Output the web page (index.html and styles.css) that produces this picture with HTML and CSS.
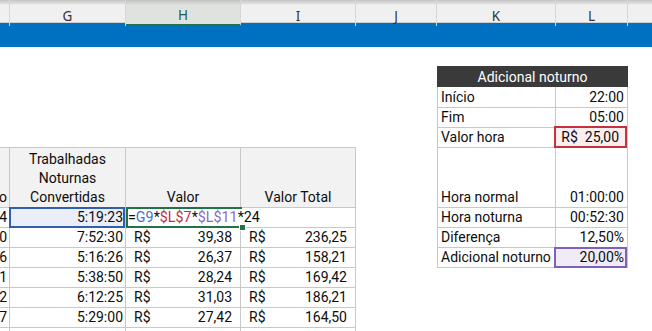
FILE: index.html
```html
<!DOCTYPE html>
<html lang="pt-BR">
<head>
<meta charset="utf-8">
<title>Adicional noturno</title>
<link rel="stylesheet" href="styles.css">
</head>
<body>
<div class="colbar">
  <div class="ch"></div>
  <div class="ch">G</div>
  <div class="ch sel">H</div>
  <div class="ch">I</div>
  <div class="ch">J</div>
  <div class="ch">K</div>
  <div class="ch">L</div>
  <div class="ch last"></div>
</div>
<div class="band"></div>
<div class="sheet">
  <!-- row A -->
  <div class="c"></div><div class="c"></div><div class="c"></div><div class="c"></div><div class="c"></div><div class="c"></div><div class="c"></div><div class="c"></div>
  <!-- row B -->
  <div class="c"></div><div class="c"></div><div class="c"></div><div class="c"></div><div class="c"></div>
  <div class="c title">Adicional noturno</div>
  <div class="c"></div>
  <!-- row C -->
  <div class="c"></div><div class="c"></div><div class="c"></div><div class="c"></div><div class="c"></div>
  <div class="c k">Início</div><div class="c l num">22:00</div><div class="c"></div>
  <!-- row D -->
  <div class="c"></div><div class="c"></div><div class="c"></div><div class="c"></div><div class="c"></div>
  <div class="c k">Fim</div><div class="c l num">05:00</div><div class="c"></div>
  <!-- row E -->
  <div class="c bb"></div><div class="c bb"></div><div class="c bb"></div><div class="c bb"></div><div class="c"></div>
  <div class="c k">Valor hora</div><div class="c l num ref-red">R$&nbsp; 25,00</div><div class="c"></div>
  <!-- row F (header) -->
  <div class="c t h num clip">o</div>
  <div class="c t h center">Trabalhadas<br>Noturnas<br>Convertidas</div>
  <div class="c t h center">Valor</div>
  <div class="c t h center">Valor Total</div>
  <div class="c"></div>
  <div class="c k">Hora normal</div><div class="c l num">01:00:00</div><div class="c"></div>
  <!-- row 9 -->
  <div class="c t num f">4</div>
  <div class="c t num g active">5:19:23</div>
  <div class="c t edit">=<span class="fb">G9</span>*<span class="fr">$L$7</span>*<span class="fp">$L$11</span>*24</div>
  <div class="c t"></div>
  <div class="c"></div>
  <div class="c k">Hora noturna</div><div class="c l num">00:52:30</div><div class="c"></div>
  <!-- row 10 -->
  <div class="c t num f">0</div>
  <div class="c t num g">7:52:30</div>
  <div class="c t acc"><span>R$</span><span>39,38</span></div>
  <div class="c t acc"><span>R$</span><span>236,25</span></div>
  <div class="c"></div>
  <div class="c k">Diferença</div><div class="c l num">12,50%</div><div class="c"></div>
  <!-- row 11 -->
  <div class="c t num f">6</div>
  <div class="c t num g">5:16:26</div>
  <div class="c t acc"><span>R$</span><span>26,37</span></div>
  <div class="c t acc"><span>R$</span><span>158,21</span></div>
  <div class="c"></div>
  <div class="c k">Adicional noturno</div><div class="c l num ref-purple">20,00%</div><div class="c"></div>
  <!-- row 12 -->
  <div class="c t num f">1</div>
  <div class="c t num g">5:38:50</div>
  <div class="c t acc"><span>R$</span><span>28,24</span></div>
  <div class="c t acc"><span>R$</span><span>169,42</span></div>
  <div class="c"></div><div class="c"></div><div class="c"></div><div class="c"></div>
  <!-- row 13 -->
  <div class="c t num f">2</div>
  <div class="c t num g">6:12:25</div>
  <div class="c t acc"><span>R$</span><span>31,03</span></div>
  <div class="c t acc"><span>R$</span><span>186,21</span></div>
  <div class="c"></div><div class="c"></div><div class="c"></div><div class="c"></div>
  <!-- row 14 -->
  <div class="c t num f">7</div>
  <div class="c t num g">5:29:00</div>
  <div class="c t acc"><span>R$</span><span>27,42</span></div>
  <div class="c t acc"><span>R$</span><span>164,50</span></div>
  <div class="c"></div><div class="c"></div><div class="c"></div><div class="c"></div>
  <!-- row 15 -->
  <div class="c t"></div><div class="c t"></div><div class="c t"></div><div class="c t"></div>
  <div class="c"></div><div class="c"></div><div class="c"></div><div class="c"></div>
</div>
</body>
</html>
```
FILE: styles.css
```css
html, body {
  margin: 0;
  padding: 0;
  background: #ffffff;
}
body {
  width: 652px;
  height: 331px;
  overflow: hidden;
  font-family: Roboto, "Liberation Sans", sans-serif;
}

.colbar {
  display: grid;
  grid-template-columns: 10px 116px 115px 115px 81px 119px 72px 24px;
  height: 23px;
  background: linear-gradient(#c4c4c4 0, #e2e2e2 4px, #f3f3f3 5px, #f0f0f0 6px, #f0f0f0 100%);
  box-sizing: border-box;
  border-bottom: 1px solid #cfcfcf;
}
.ch {
  display: flex;
  align-items: center;
  justify-content: center;
  padding-top: 5px;
  box-sizing: border-box;
  border-right: 1px solid #d6d6d6;
  font-family: "Noto Sans", "Open Sans", sans-serif;
  font-size: 13.5px;
  color: #333333;
}
.ch.last { border-right: none; }
.ch.sel {
  background: linear-gradient(#c4c4c4 0, #d8dad8 4px, #e0e2e0 5px, #e0e2e0 100%);
  border-bottom: 2px solid #217346;
  color: #24594a;
  padding-top: 6px;
}

.band {
  height: 24px;
  background: #0070c0;
}

.sheet {
  display: grid;
  grid-template-columns: 10px 116px 115px 115px 81px 119px 72px 24px;
  grid-template-rows: 19px 21px 21px 20px 20px 60px repeat(7, 20px);
  height: 284px;
  overflow: hidden;
}

.c {
  position: relative;
  box-sizing: border-box;
  display: flex;
  align-items: flex-end;
  padding: 0 3px 1px 3px;
  white-space: nowrap;
  overflow: hidden;
  font-size: 14px;
  line-height: 18px;
  color: #0d0d0d;
}
.num { justify-content: flex-end; }
.center { justify-content: center; text-align: center; }

.t {
  border-right: 1px solid #c8c8c8;
  border-bottom: 1px solid #c8c8c8;
}
.bb { border-bottom: 1px solid #c8c8c8; }
.h {
  background: #f2f2f2;
  white-space: normal;
  line-height: 19px;
  padding-bottom: 0;
}
.h.clip { white-space: nowrap; padding-right: 2px; }
.f { padding-right: 2px; }
.g { padding-right: 2px; }

.acc {
  justify-content: space-between;
  padding: 0 8px 1px 8px;
}

.title {
  grid-column: span 2;
  background: #3a3a3a;
  color: #ffffff;
  justify-content: center;
}
.k {
  border-left: 1px solid #c8c8c8;
  border-right: 1px solid #c8c8c8;
  border-bottom: 1px solid #c8c8c8;
}
.l {
  border-right: 1px solid #c8c8c8;
  border-bottom: 1px solid #c8c8c8;
}

.active {
  background: #e9eef8;
  overflow: visible;
  z-index: 2;
}
.active::after {
  content: "";
  position: absolute;
  left: -1px;
  top: -1px;
  right: 0;
  bottom: -1px;
  border: 2px solid #2f5fae;
}

.edit {
  border-right: none;
  overflow: visible;
  z-index: 3;
  padding-left: 2px;
  font-size: 14.3px;
}
.edit::before {
  content: "";
  position: absolute;
  left: 0;
  top: -1px;
  right: -1px;
  bottom: -1px;
  border: 2px solid #217346;
  border-right: none;
}
.edit::after {
  content: "";
  position: absolute;
  right: -4px;
  bottom: -3px;
  width: 5px;
  height: 5px;
  background: #217346;
  outline: 1px solid #ffffff;
}
.fb { color: #4472c4; }
.fr { color: #c5303a; }
.fp { color: #8b6bc2; }

.ref-red {
  background: #fcedef;
  overflow: visible;
  padding-right: 8px;
}
.ref-red::after {
  content: "";
  position: absolute;
  left: -2px;
  top: -2px;
  right: 0;
  bottom: -1px;
  border: 2px solid #c7303f;
}
.ref-purple {
  background: #efecf8;
  overflow: visible;
}
.ref-purple::after {
  content: "";
  position: absolute;
  left: -2px;
  top: -1px;
  right: 0;
  bottom: -1px;
  border: 2px solid #8060bf;
}
```
